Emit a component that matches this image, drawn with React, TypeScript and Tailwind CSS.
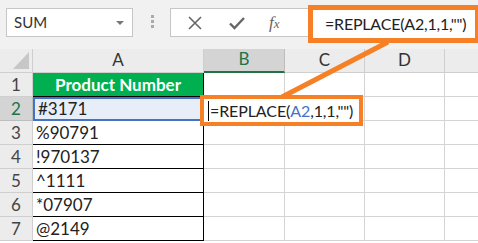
import React from 'react';

const font = { fontFamily: 'Lato, "Liberation Sans", sans-serif' };

const rows = ['#3171', '%90791', '!970137', '^1111', '*07907', '@2149'];

const Formula = () => (
  <span>
    =REPLACE(<span className="text-[#4472c4]">A2</span>,1,1,"")
  </span>
);

export default function App() {
  return (
    <div className="relative w-[478px] h-[243px] overflow-hidden bg-white text-[#222]" style={font}>
      {/* toolbar */}
      <div className="flex items-start h-[49px] bg-[#f1f1f1] pt-[8px] pl-[6px]">
        <div className="flex items-center justify-between w-[127px] h-[29px] bg-white border border-[#c6c6c6] pl-[7px] pr-[8px] text-[15px] text-[#333]">
          <span>SUM</span>
          <span className="w-0 h-0 border-l-[4px] border-r-[4px] border-t-[4px] border-l-transparent border-r-transparent border-t-[#777]" />
        </div>
        <div className="flex flex-col gap-[2px] ml-[18px] mt-[7px]">
          <span className="w-[3px] h-[3px] bg-[#aaa]" />
          <span className="w-[3px] h-[3px] bg-[#aaa]" />
          <span className="w-[3px] h-[3px] bg-[#aaa]" />
        </div>
        <div className="flex items-center flex-1 h-[29px] ml-[16px] bg-white border border-[#c6c6c6]">
          <svg width="14" height="14" viewBox="0 0 14 14" className="ml-[17px]">
            <path d="M1 1L13 13M13 1L1 13" stroke="#666" strokeWidth="1.6" />
          </svg>
          <svg width="16" height="14" viewBox="0 0 16 14" className="ml-[27px]">
            <path d="M1 7.5L5.5 12L15 2" stroke="#666" strokeWidth="2.4" fill="none" />
          </svg>
          <span className="ml-[24px] text-[17px] italic text-[#666]" style={{ fontFamily: '"Liberation Serif", serif' }}>
            f<span className="text-[13px]">x</span>
          </span>
        </div>
      </div>

      {/* sheet */}
      <div className="grid grid-cols-[33px_171px_81px_80px_80px_1fr] auto-rows-[24px] text-[17px]">
        <div className="relative bg-[#ececec] border-r border-b border-[#cfcfcf]">
          <svg width="16" height="17" viewBox="0 0 16 17" className="absolute right-[3px] bottom-[3px]">
            <path d="M16 0L16 17L0 17Z" fill="#c7c7c7" />
          </svg>
        </div>
        <div className="flex items-end justify-center bg-[#ececec] border-r border-b border-[#cfcfcf] text-[#333]">A</div>
        <div className="flex items-end justify-center bg-[#d4d4d4] border-r border-[#bdbdbd] border-b-2 border-b-[#217346] text-[#217346]">B</div>
        <div className="flex items-end justify-center bg-[#ececec] border-r border-b border-[#cfcfcf] text-[#333]">C</div>
        <div className="flex items-end justify-center bg-[#ececec] border-r border-b border-[#cfcfcf] text-[#333]">D</div>
        <div className="bg-[#ececec] border-b border-[#cfcfcf]" />

        <div className="flex items-center justify-center bg-[#ececec] border-r border-b border-[#cfcfcf] text-[#444]">1</div>
        <div className="flex items-center justify-center bg-[#00b050] border-r border-b border-black text-white font-bold">Product Number</div>
        <div className="border-r border-b border-[#d4d4d4]" />
        <div className="border-r border-b border-[#d4d4d4]" />
        <div className="border-r border-b border-[#d4d4d4]" />
        <div className="border-b border-[#d4d4d4]" />

        {rows.map((v, i) => (
          <React.Fragment key={v}>
            <div
              className={
                i === 0
                  ? 'flex items-center justify-center bg-[#d4d4d4] border-r border-b border-[#bdbdbd] text-[#217346]'
                  : 'flex items-center justify-center bg-[#ececec] border-r border-b border-[#cfcfcf] text-[#444]'
              }
            >
              {i + 2}
            </div>
            <div
              className={
                i === 0
                  ? 'flex items-center pl-[3px] bg-[#e8eef8] border-y-2 border-x-2 border-[#4472c4]'
                  : 'flex items-center pl-[3px] border-r border-b border-black'
              }
            >
              {v}
            </div>
            <div className="border-r border-b border-[#d4d4d4]" />
            <div className="border-r border-b border-[#d4d4d4]" />
            <div className="border-r border-b border-[#d4d4d4]" />
            <div className="border-b border-[#d4d4d4]" />
          </React.Fragment>
        ))}
      </div>

      {/* callouts */}
      <div className="absolute left-[308px] top-[5px] w-[172px] h-[38px] border-[5px] border-[#f58025] bg-white flex items-center pl-[12px] text-[16px] tracking-[-0.2px] text-[#222]">
        =REPLACE(A2,1,1,"")
      </div>
      <svg className="absolute left-0 top-0 pointer-events-none" width="478" height="243">
        <line x1="282" y1="97" x2="388" y2="42" stroke="#f58025" strokeWidth="5" />
      </svg>
      <div className="absolute left-[200px] top-[95px] w-[163px] h-[31px] border-[4px] border-[#f58025] bg-white flex items-center pl-[4px] text-[16px] tracking-[-0.1px] text-[#222]">
        <span className="border-l border-black pl-[1px] leading-[20px]">
          <Formula />
        </span>
      </div>
    </div>
  );
}
